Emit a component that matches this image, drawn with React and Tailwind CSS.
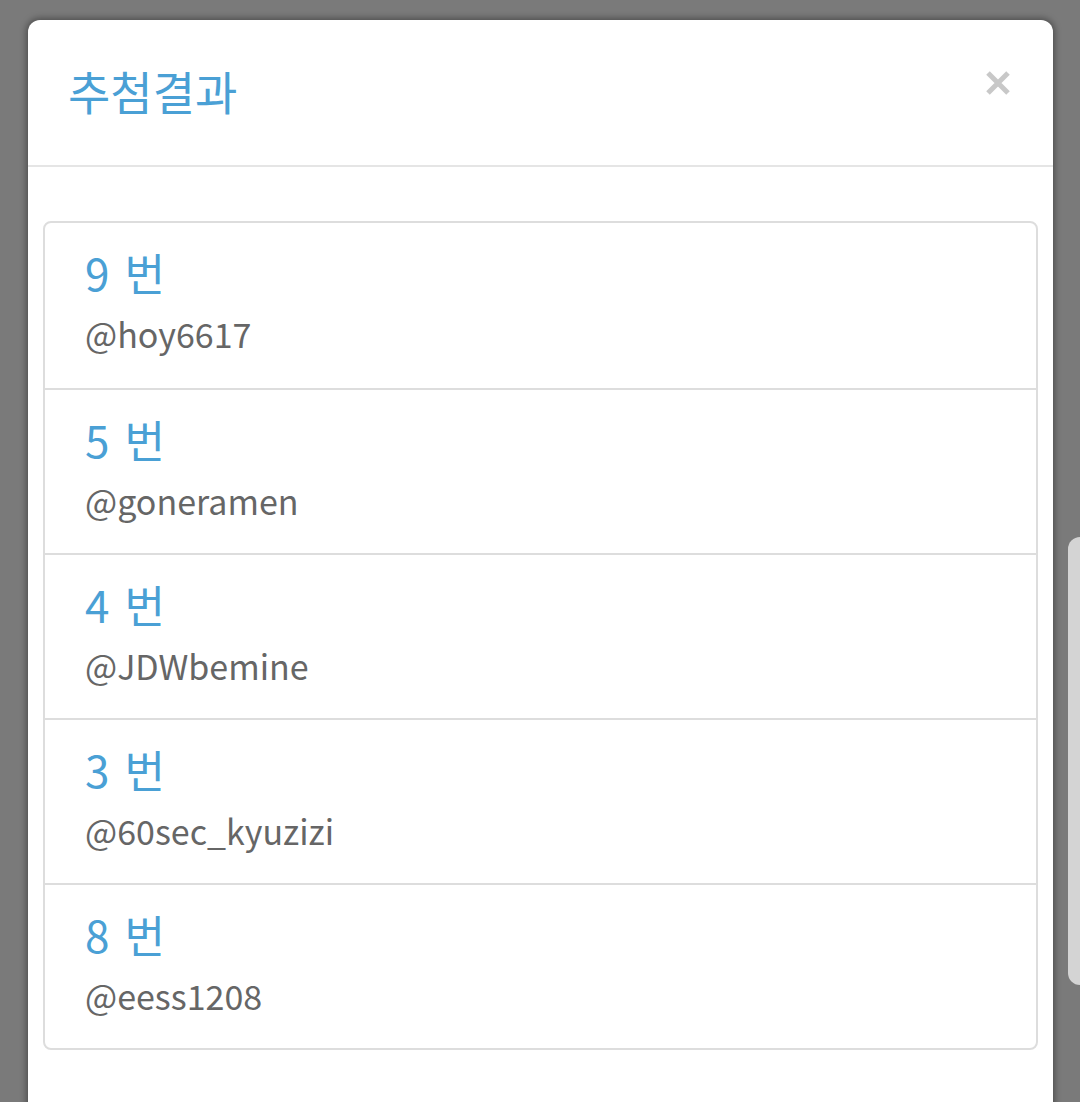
import React from 'react';

const winners = [
  { num: 9, id: '@hoy6617' },
  { num: 5, id: '@goneramen' },
  { num: 4, id: '@JDWbemine' },
  { num: 3, id: '@60sec_kyuzizi' },
  { num: 8, id: '@eess1208' },
];

const App = () => {
  return (
    <div
      className="relative h-[1102px] w-[1080px] overflow-hidden bg-[#7a7a7a] pl-[28px] pr-[27px] pt-[20px]"
      style={{ fontFamily: '"Noto Sans CJK KR", "Noto Sans", sans-serif' }}
    >
      <div className="h-[1100px] rounded-t-[12px] bg-white shadow-[0_0_6px_2px_rgba(0,0,0,0.35)]">
        <div className="flex h-[147px] items-center justify-between border-b-2 border-[#e5e5e5] pl-[40px] pr-[42px]">
          <h4 className="mt-[-6px] text-[46px] font-normal leading-none text-[#4aa0d5]">추첨결과</h4>
          <svg width="26" height="26" viewBox="0 0 26 26" className="mt-[-20px]">
            <path d="M3 3 L23 23 M23 3 L3 23" stroke="#c8c8c8" strokeWidth="5" strokeLinecap="butt" />
          </svg>
        </div>
        <div className="px-[15px] pt-[54px]">
          <ul className="rounded-[8px] border-2 border-[#dddddd]">
            {winners.map((w, i) => (
              <li
                key={w.id}
                className={`flex h-[165px] flex-col px-[40px] pt-[19px] ${i > 0 ? 'border-t-2 border-[#dddddd]' : ''}`}
              >
                <span className="text-[44px] leading-[60px] text-[#4aa0d5]">
                  {w.num}
                  <span className="ml-[15px]">번</span>
                </span>
                <span className="mt-[8px] text-[34px] leading-[48px] text-[#666666]">{w.id}</span>
              </li>
            ))}
          </ul>
        </div>
      </div>
      <div className="absolute right-0 top-[537px] h-[448px] w-[12px] rounded-l-[12px] bg-[#d4d4d4]" />
    </div>
  );
};

export default App;
